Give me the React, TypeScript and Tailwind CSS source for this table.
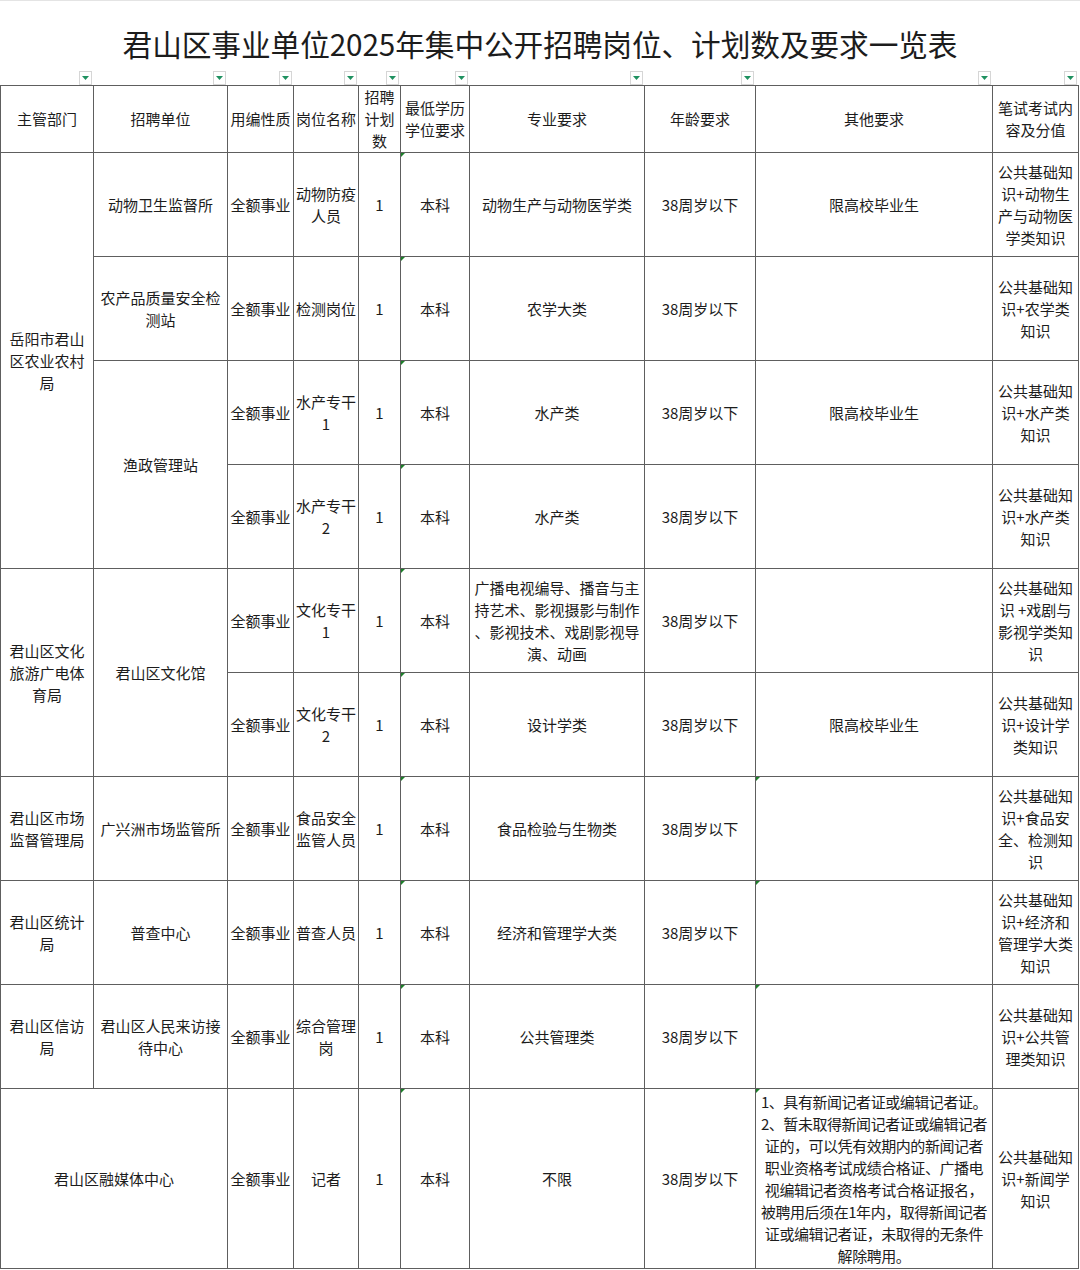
import React from "react";

const colW = [93, 134, 66, 65, 42, 69, 175, 111, 237, 86];

const Mark = () => (
  <span className="absolute left-0 top-0 h-0 w-0 border-t-[4px] border-r-[4px] border-t-[#1d7f2a] border-r-transparent" />
);

function Drop() {
  return (
    <div className="flex h-[14px] w-[13px] items-center justify-center border border-[#d6d6d6] bg-white">
      <svg width="7" height="4" viewBox="0 0 7 4">
        <polygon points="0,0 7,0 3.5,4" fill="#1f9160" />
      </svg>
    </div>
  );
}

type CellProps = {
  children?: React.ReactNode;
  rowSpan?: number;
  colSpan?: number;
  mark?: boolean;
  tight?: boolean;
};

function C({ children, rowSpan, colSpan, mark, tight }: CellProps) {
  return (
    <td
      rowSpan={rowSpan}
      colSpan={colSpan}
      className={
        "relative border border-[#5e5e5e] text-center align-middle whitespace-pre " +
        (tight ? "px-0 tracking-[-0.45px]" : "px-[2px]")
      }
    >
      {mark && <Mark />}
      {children}
    </td>
  );
}

type Row = {
  a?: { t: string; rs?: number; cs?: number };
  b?: { t: string; rs?: number };
  c: string;
  d: string;
  e: string;
  f: string;
  g: string;
  h: string;
  i: string;
  j: string;
  mi?: boolean;
  h2?: boolean;
};

const rows: Row[] = [
  {
    a: { t: "岳阳市君山\n区农业农村\n局", rs: 4 },
    b: { t: "动物卫生监督所" },
    c: "全额事业",
    d: "动物防疫\n人员",
    e: "1",
    f: "本科",
    g: "动物生产与动物医学类",
    h: "38周岁以下",
    i: "限高校毕业生",
    j: "公共基础知\n识+动物生\n产与动物医\n学类知识",
  },
  {
    b: { t: "农产品质量安全检\n测站" },
    c: "全额事业",
    d: "检测岗位",
    e: "1",
    f: "本科",
    g: "农学大类",
    h: "38周岁以下",
    i: "",
    j: "公共基础知\n识+农学类\n知识",
  },
  {
    b: { t: "渔政管理站", rs: 2 },
    c: "全额事业",
    d: "水产专干\n1",
    e: "1",
    f: "本科",
    g: "水产类",
    h: "38周岁以下",
    i: "限高校毕业生",
    j: "公共基础知\n识+水产类\n知识",
  },
  {
    c: "全额事业",
    d: "水产专干\n2",
    e: "1",
    f: "本科",
    g: "水产类",
    h: "38周岁以下",
    i: "",
    j: "公共基础知\n识+水产类\n知识",
  },
  {
    a: { t: "君山区文化\n旅游广电体\n育局", rs: 2 },
    b: { t: "君山区文化馆", rs: 2 },
    c: "全额事业",
    d: "文化专干\n1",
    e: "1",
    f: "本科",
    g: "广播电视编导、播音与主\n持艺术、影视摄影与制作\n、影视技术、戏剧影视导\n演、动画",
    h: "38周岁以下",
    i: "",
    j: "公共基础知\n识 +戏剧与\n影视学类知\n识",
  },
  {
    c: "全额事业",
    d: "文化专干\n2",
    e: "1",
    f: "本科",
    g: "设计学类",
    h: "38周岁以下",
    i: "限高校毕业生",
    j: "公共基础知\n识+设计学\n类知识",
  },
  {
    a: { t: "君山区市场\n监督管理局" },
    b: { t: "广兴洲市场监管所" },
    c: "全额事业",
    d: "食品安全\n监管人员",
    e: "1",
    f: "本科",
    g: "食品检验与生物类",
    h: "38周岁以下",
    i: "",
    j: "公共基础知\n识+食品安\n全、检测知\n识",
    mi: true,
  },
  {
    a: { t: "君山区统计\n局" },
    b: { t: "普查中心" },
    c: "全额事业",
    d: "普查人员",
    e: "1",
    f: "本科",
    g: "经济和管理学大类",
    h: "38周岁以下",
    i: "",
    j: "公共基础知\n识+经济和\n管理学大类\n知识",
    mi: true,
  },
  {
    a: { t: "君山区信访\n局" },
    b: { t: "君山区人民来访接\n待中心" },
    c: "全额事业",
    d: "综合管理\n岗",
    e: "1",
    f: "本科",
    g: "公共管理类",
    h: "38周岁以下",
    i: "",
    j: "公共基础知\n识+公共管\n理类知识",
    mi: true,
  },
  {
    a: { t: "君山区融媒体中心", cs: 2 },
    c: "全额事业",
    d: "记者",
    e: "1",
    f: "本科",
    g: "不限",
    h: "38周岁以下",
    i: "1、具有新闻记者证或编辑记者证。\n2、暂未取得新闻记者证或编辑记者\n证的，可以凭有效期内的新闻记者\n职业资格考试成绩合格证、广播电\n视编辑记者资格考试合格证报名，\n被聘用后须在1年内，取得新闻记者\n证或编辑记者证，未取得的无条件\n解除聘用。",
    j: "公共基础知\n识+新闻学\n知识",
    mi: true,
    h2: true,
  },
];

const headers = [
  "主管部门",
  "招聘单位",
  "用编性质",
  "岗位名称",
  "招聘\n计划\n数",
  "最低学历\n学位要求",
  "专业要求",
  "年龄要求",
  "其他要求",
  "笔试考试内\n容及分值",
];

export default function App() {
  return (
    <div
      className="w-[1080px] bg-white text-[#1c1c1c] border-t border-[#e4e4e4]"
      style={{ fontFamily: '"Noto Sans CJK SC", "Noto Sans", sans-serif' }}
    >
      <div className="flex h-[67px] items-start justify-center pt-[23px]">
        <h1 className="text-[29.7px] leading-[40px] font-normal tracking-[-0.1px]">
          君山区事业单位2025年集中公开招聘岗位、计划数及要求一览表
        </h1>
      </div>
      <div className="flex h-[17px] items-start pt-[3px]">
        {colW.map((w, i) => (
          <div key={i} className="flex justify-end pr-[1px]" style={{ width: w }}>
            <Drop />
          </div>
        ))}
      </div>
      <table className="w-[1079px] table-fixed border-collapse text-[15px] leading-[22px]">
        <colgroup>
          {colW.map((w, i) => (
            <col key={i} style={{ width: w }} />
          ))}
        </colgroup>
        <tbody>
          <tr className="h-[63px]">
            {headers.map((h, i) => (
              <C key={i}>{h}</C>
            ))}
          </tr>
          {rows.map((r, idx) => (
            <tr key={idx} className={r.h2 ? "h-[180px]" : "h-[104px]"}>
              {r.a && (
                <C rowSpan={r.a.rs} colSpan={r.a.cs}>
                  {r.a.t}
                </C>
              )}
              {r.b && <C rowSpan={r.b.rs}>{r.b.t}</C>}
              <C>{r.c}</C>
              <C>{r.d}</C>
              <C>{r.e}</C>
              <C mark>{r.f}</C>
              <C>{r.g}</C>
              <C>{r.h}</C>
              <C mark={r.mi} tight={r.h2}>
                {r.i}
              </C>
              <C>{r.j}</C>
            </tr>
          ))}
        </tbody>
      </table>
    </div>
  );
}
